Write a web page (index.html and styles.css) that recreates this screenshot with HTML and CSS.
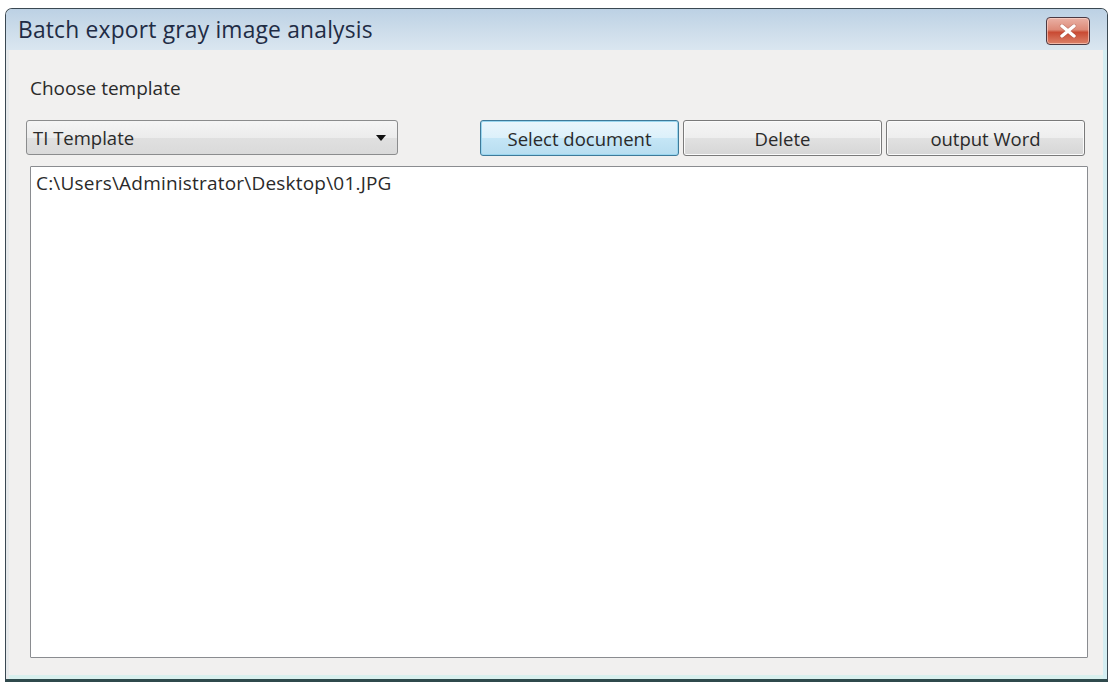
FILE: index.html
```html
<!DOCTYPE html>
<html lang="en">
<head>
    <meta charset="UTF-8">
    <title>Batch export gray image analysis</title>
    <link rel="stylesheet" href="styles.css">
</head>
<body>
    <div class="window">
        <div class="titlebar">
            <span class="title">Batch export gray image analysis</span>
            <button class="close" title="Close">
                <svg width="18" height="14" viewBox="0 0 18 14">
                    <path d="M3 2 L15 12 M15 2 L3 12" stroke="#8a3a30" stroke-width="4.5" stroke-linecap="round" opacity="0.35"/>
                    <path d="M3 2 L15 12 M15 2 L3 12" stroke="#ffffff" stroke-width="3.4" stroke-linecap="round"/>
                </svg>
            </button>
        </div>
        <div class="client">
            <div class="label">Choose template</div>
            <div class="toolbar">
                <div class="combo">
                    <span>TI Template</span>
                    <span class="arrow"></span>
                </div>
                <div class="buttons">
                    <button class="btn focused">Select document</button>
                    <button class="btn">Delete</button>
                    <button class="btn">output Word</button>
                </div>
            </div>
            <div class="filelist">
                <div class="item">C:\Users\Administrator\Desktop\01.JPG</div>
            </div>
        </div>
    </div>
</body>
</html>
```

FILE: styles.css
```css
body {
    margin: 0;
    background: #ffffff;
    font-family: 'Open Sans', 'Noto Sans', sans-serif;
    color: #2a2a2a;
}
.window {
    margin: 8px 6px 2px 5px;
    height: 670px;
    border: 1px solid #3a4852;
    border-bottom: 3px solid #2f4a4c;
    border-radius: 7px 7px 0 0;
    background: #f1f0ef;
    display: flex;
    flex-direction: column;
    box-shadow: inset -4px 0 0 #d4eef2, inset 3px 0 0 #e6e9eb, inset 0 -4px 0 #d9f0ee;
}
.titlebar {
    height: 41px;
    display: flex;
    align-items: center;
    justify-content: space-between;
    padding: 0 17px 0 12px;
    background: linear-gradient(to bottom, #bcd1e4, #cfdeeb 60%, #dae6f0);
    border-radius: 6px 6px 0 0;
}
.title {
    font-size: 22.8px;
    color: #1f2c45;
    letter-spacing: 0.2px;
}
.close {
    width: 44px;
    height: 28px;
    margin-top: 2px;
    border: 1px solid #4b3942;
    border-radius: 4px;
    background: linear-gradient(to bottom, #eab1a5, #dd8a78 45%, #c94a33 55%, #dc826a);
    display: flex;
    align-items: center;
    justify-content: center;
    padding: 0;
    box-shadow: inset 0 0 0 1px rgba(255, 220, 210, 0.6);
}
.client {
    flex: 1;
    display: flex;
    flex-direction: column;
    padding: 25px 19px 21px 20px;
}
.label {
    font-size: 19px;
    line-height: 26px;
    margin-left: 4px;
    height: 26px;
}
.toolbar {
    display: flex;
    justify-content: space-between;
    margin-top: 19px;
    margin-right: 3px;
}
.combo {
    width: 372px;
    height: 35px;
    border: 1px solid #8b8c8d;
    border-radius: 3px;
    background: linear-gradient(to bottom, #f5f5f5, #ececec 50%, #e0e0e0 51%, #dadada);
    display: flex;
    align-items: center;
    justify-content: space-between;
    padding: 0 11px 0 6px;
    box-sizing: border-box;
    font-size: 18.5px;
}
.arrow {
    width: 0;
    height: 0;
    border-left: 5px solid transparent;
    border-right: 5px solid transparent;
    border-top: 6px solid #111;
}
.buttons {
    display: flex;
    gap: 4px;
}
.btn {
    width: 199px;
    height: 36px;
    font-family: inherit;
    font-size: 18.5px;
    color: #2a2a2a;
    border: 1px solid #7a7a7a;
    border-radius: 3px;
    background: linear-gradient(to bottom, #f5f5f5, #eeeeee 50%, #e1e1e1 51%, #d6d6d6);
    box-shadow: inset 0 0 0 1px #fbfbfb;
}
.btn.focused {
    border-color: #3f7a99;
    background: linear-gradient(to bottom, #eaf6fc, #dcf0fa 50%, #c5e6f6 51%, #b7ddf0);
    box-shadow: inset 0 0 0 1px #9ad6ef;
}
.filelist {
    flex: 1;
    margin: 10px 0 0 4px;
    background: #ffffff;
    border: 1px solid #8a8c90;
    border-radius: 1px;
    padding: 3px 5px;
}
.item {
    font-size: 19px;
    letter-spacing: 0.2px;
}
```
